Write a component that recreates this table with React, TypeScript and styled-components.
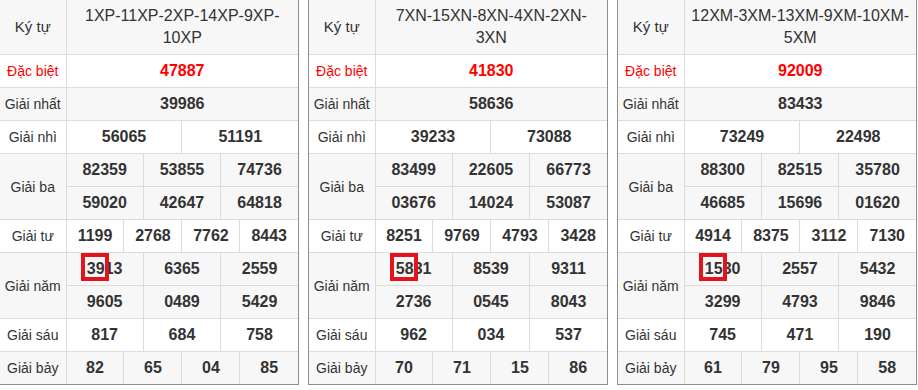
import styled, { createGlobalStyle } from "styled-components";

const GlobalStyle = createGlobalStyle`
  body {
    margin: 0;
    background: #ffffff;
    font-family: "Liberation Sans", Arial, sans-serif;
  }
`;

const Page = styled.div`
  display: flex;
  gap: 9px;
  margin: -1px 0 0 -1px;
`;

const Frame = styled.div`
  flex: none;
  width: 300px;
  box-sizing: border-box;
  border: 1px solid #8e8e8e;
`;

const Table = styled.table`
  width: 100%;
  border-collapse: collapse;
  border-style: hidden;
  table-layout: fixed;
`;

const Row = styled.tr<{ $shade?: boolean }>`
  background: ${(p) => (p.$shade ? "#f7f7f7" : "#ffffff")};
`;

const Label = styled.td<{ $red?: boolean }>`
  border: 1px solid #dcdcdc;
  padding: 5px 0;
  height: 22px;
  line-height: 22px;
  font-size: 14px;
  color: ${(p) => (p.$red ? "#ff0000" : "#333333")};
  text-align: center;
  white-space: nowrap;
`;

const HeadLabel = styled(Label)`
  font-size: 15px;
`;

const HeadCell = styled.td`
  border: 1px solid #dcdcdc;
  padding: 5px 6px;
  line-height: 22px;
  font-size: 16px;
  color: #333333;
  text-align: center;
`;

const Num = styled.td<{ $red?: boolean }>`
  border: 1px solid #dcdcdc;
  padding: 5px 0;
  height: 22px;
  line-height: 22px;
  font-size: 16px;
  font-weight: bold;
  color: ${(p) => (p.$red ? "#ff0000" : "#333333")};
  text-align: center;
  white-space: nowrap;
`;

const Marked = styled.span`
  position: relative;
  display: inline-block;
`;

const MarkBox = styled.span`
  position: absolute;
  left: -6px;
  top: -5px;
  width: 28px;
  height: 28px;
  box-sizing: border-box;
  border: 4px solid #e3141b;
`;

type Prize = { label: string; nums: string[]; perRow: number; red?: boolean; mark?: boolean };
type Draw = { code: string; prizes: Prize[] };

const draws: Draw[] = [
  {
    code: "1XP-11XP-2XP-14XP-9XP-10XP",
    prizes: [
      { label: "Đặc biệt", nums: ["47887"], perRow: 1, red: true },
      { label: "Giải nhất", nums: ["39986"], perRow: 1 },
      { label: "Giải nhì", nums: ["56065", "51191"], perRow: 2 },
      { label: "Giải ba", nums: ["82359", "53855", "74736", "59020", "42647", "64818"], perRow: 3 },
      { label: "Giải tư", nums: ["1199", "2768", "7762", "8443"], perRow: 4 },
      { label: "Giải năm", nums: ["3913", "6365", "2559", "9605", "0489", "5429"], perRow: 3, mark: true },
      { label: "Giải sáu", nums: ["817", "684", "758"], perRow: 3 },
      { label: "Giải bảy", nums: ["82", "65", "04", "85"], perRow: 4 },
    ],
  },
  {
    code: "7XN-15XN-8XN-4XN-2XN-3XN",
    prizes: [
      { label: "Đặc biệt", nums: ["41830"], perRow: 1, red: true },
      { label: "Giải nhất", nums: ["58636"], perRow: 1 },
      { label: "Giải nhì", nums: ["39233", "73088"], perRow: 2 },
      { label: "Giải ba", nums: ["83499", "22605", "66773", "03676", "14024", "53087"], perRow: 3 },
      { label: "Giải tư", nums: ["8251", "9769", "4793", "3428"], perRow: 4 },
      { label: "Giải năm", nums: ["5831", "8539", "9311", "2736", "0545", "8043"], perRow: 3, mark: true },
      { label: "Giải sáu", nums: ["962", "034", "537"], perRow: 3 },
      { label: "Giải bảy", nums: ["70", "71", "15", "86"], perRow: 4 },
    ],
  },
  {
    code: "12XM-3XM-13XM-9XM-10XM-5XM",
    prizes: [
      { label: "Đặc biệt", nums: ["92009"], perRow: 1, red: true },
      { label: "Giải nhất", nums: ["83433"], perRow: 1 },
      { label: "Giải nhì", nums: ["73249", "22498"], perRow: 2 },
      { label: "Giải ba", nums: ["88300", "82515", "35780", "46685", "15696", "01620"], perRow: 3 },
      { label: "Giải tư", nums: ["4914", "8375", "3112", "7130"], perRow: 4 },
      { label: "Giải năm", nums: ["1530", "2557", "5432", "3299", "4793", "9846"], perRow: 3, mark: true },
      { label: "Giải sáu", nums: ["745", "471", "190"], perRow: 3 },
      { label: "Giải bảy", nums: ["61", "79", "95", "58"], perRow: 4 },
    ],
  },
];

const chunk = (arr: string[], size: number) => {
  const out: string[][] = [];
  for (let i = 0; i < arr.length; i += size) out.push(arr.slice(i, i + size));
  return out;
};

const ResultTable = ({ draw }: { draw: Draw }) => {
  return (
    <Frame>
      <Table>
        <colgroup>
          <col style={{ width: 66 }} />
          {Array.from({ length: 12 }).map((_, i) => (
            <col key={i} />
          ))}
        </colgroup>
        <tbody>
          <Row $shade>
            <HeadLabel>Ký tự</HeadLabel>
            <HeadCell colSpan={12}>{draw.code}</HeadCell>
          </Row>
          {draw.prizes.map((prize, pi) => {
            const lines = chunk(prize.nums, prize.perRow);
            const shade = pi % 2 === 1;
            return lines.map((line, li) => (
              <Row key={prize.label + li} $shade={shade}>
                {li === 0 && (
                  <Label rowSpan={lines.length} $red={prize.red}>
                    {prize.label}
                  </Label>
                )}
                {line.map((n, ni) => (
                  <Num key={ni} colSpan={12 / prize.perRow} $red={prize.red}>
                    {prize.mark && li === 0 && ni === 0 ? (
                      <Marked>
                        {n}
                        <MarkBox />
                      </Marked>
                    ) : (
                      n
                    )}
                  </Num>
                ))}
              </Row>
            ));
          })}
        </tbody>
      </Table>
    </Frame>
  );
};

const App = () => {
  return (
    <>
      <GlobalStyle />
      <Page>
        {draws.map((d) => (
          <ResultTable key={d.code} draw={d} />
        ))}
      </Page>
    </>
  );
};

export default App;
